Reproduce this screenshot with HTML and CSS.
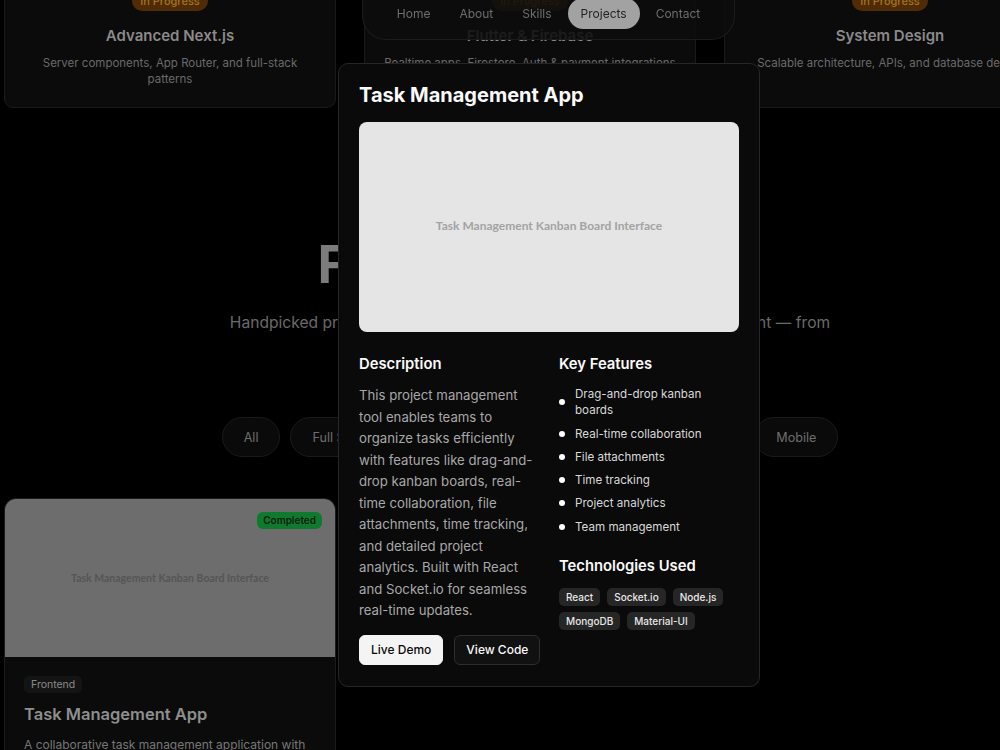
FILE: index.html
```html
<!DOCTYPE html>
<html lang="en">
<head>
  <meta charset="UTF-8" />
  <meta name="viewport" content="width=device-width, initial-scale=1.0" />
  <title>Projects</title>
  <link rel="stylesheet" href="styles.css">
</head>
<body>
  <nav class="topnav">
    <div class="nav-pill">
      <a class="nav-link">Home</a>
      <a class="nav-link">About</a>
      <a class="nav-link">Skills</a>
      <a class="nav-link active">Projects</a>
      <a class="nav-link">Contact</a>
    </div>
  </nav>

  <main class="page">
    <section class="learning">
      <div class="learn-card">
        <span class="badge-progress">In Progress</span>
        <h3>Advanced Next.js</h3>
        <p>Server components, App Router, and full-stack patterns</p>
      </div>
      <div class="learn-card">
        <span class="badge-progress">In Progress</span>
        <h3>Flutter &amp; Firebase</h3>
        <p>Realtime apps, Firestore, Auth &amp; payment integrations</p>
      </div>
      <div class="learn-card">
        <span class="badge-progress">In Progress</span>
        <h3>System Design</h3>
        <p>Scalable architecture, APIs, and database design</p>
      </div>
    </section>

    <section class="projects">
      <h1 class="section-title">Featured Projects</h1>
      <p class="section-sub">Handpicked projects that reflect my approach to design and development — from<br>idea to launch.</p>

      <div class="filters">
        <button class="chip">All</button>
        <button class="chip">Full Stack</button>
        <button class="chip">Frontend</button>
        <button class="chip">Backend</button>
        <button class="chip">Data Analytics</button>
        <button class="chip">Mobile</button>
      </div>

      <div class="project-grid">
        <article class="project-card">
          <div class="project-thumb">
            <span class="status-done">Completed</span>
            <span class="thumb-label">Task Management Kanban Board Interface</span>
          </div>
          <div class="project-body">
            <span class="cat-tag">Frontend</span>
            <h3>Task Management App</h3>
            <p>A collaborative task management application with real-time updates and team features.</p>
          </div>
        </article>
      </div>
    </section>
  </main>

  <div class="modal-backdrop">
    <div class="modal">
      <h2>Task Management App</h2>
      <div class="modal-shot">Task Management Kanban Board Interface</div>

      <div class="modal-cols">
        <div class="modal-col">
          <h3>Description</h3>
          <p class="modal-desc">
            This project management tool enables teams to organize tasks efficiently with features like drag-and-drop kanban boards, real-time collaboration, file attachments, time tracking, and detailed project analytics. Built with React and Socket.io for seamless real-time updates.
          </p>
          <div class="modal-actions">
            <button class="btn btn-light">Live Demo</button>
            <button class="btn btn-dark">View Code</button>
          </div>
        </div>

        <div class="modal-col">
          <h3>Key Features</h3>
          <ul class="features">
            <li>Drag-and-drop kanban boards</li>
            <li>Real-time collaboration</li>
            <li>File attachments</li>
            <li>Time tracking</li>
            <li>Project analytics</li>
            <li>Team management</li>
          </ul>

          <h3 class="tech-title">Technologies Used</h3>
          <div class="tech-tags">
            <span class="tag">React</span>
            <span class="tag">Socket.io</span>
            <span class="tag">Node.js</span>
            <span class="tag">MongoDB</span>
            <span class="tag">Material-UI</span>
          </div>
        </div>
      </div>
    </div>
  </div>
</body>
</html>
```

FILE: styles.css
```css
* { margin: 0; padding: 0; box-sizing: border-box; }
body {
  font-family: 'Inter', 'Noto Sans', sans-serif;
  background: #000;
  color: #fafafa;
  overflow: hidden;
  height: 750px;
}
button {
  font-family: inherit;
  cursor: pointer;
  white-space: nowrap;
}

/* floating nav (page is scrolled, nav sits slightly above the top edge) */
.topnav {
  position: fixed;
  top: -10px;
  left: 0;
  right: 0;
  display: flex;
  justify-content: center;
  padding-left: 97px;
  z-index: 20;
}
.nav-pill {
  display: flex;
  gap: 3px;
  padding: 8px 21px 10px;
  background: rgba(12, 12, 12, 0.88);
  border: 1px solid #1c1c1c;
  border-top: none;
  border-radius: 0 0 24px 24px;
}
.nav-link {
  height: 31px;
  line-height: 31px;
  padding: 0 13px;
  font-size: 12px;
  color: #6e6e6e;
  border-radius: 999px;
}
.nav-link.active {
  background: #a2a2a2;
  color: #242424;
}

/* page */
.page {
  width: 1060px;
  margin-top: -30px;
}
.learning {
  display: grid;
  grid-template-columns: repeat(3, 332px);
  gap: 28px;
  padding: 0 4px;
}
.learn-card {
  display: flex;
  flex-direction: column;
  align-items: center;
  text-align: center;
  padding: 20px 16px;
  background: #0b0b0b;
  border: 1px solid #1a1a1a;
  border-radius: 9px;
}
.badge-progress {
  height: 20px;
  line-height: 20px;
  padding: 0 8px;
  font-size: 11px;
  font-weight: 500;
  color: #a8741f;
  background: #4f2c07;
  border-radius: 999px;
}
.learn-card h3 {
  margin-top: 12px;
  font-size: 15px;
  line-height: 26px;
  font-weight: 600;
  color: #8a8a8a;
}
.learn-card p {
  margin-top: 6px;
  font-size: 11.5px;
  line-height: 16px;
  color: #6a6a6a;
}

.projects {
  margin-top: 127px;
  display: flex;
  flex-direction: column;
  align-items: center;
}
.section-title {
  font-size: 52px;
  line-height: 60px;
  font-weight: 700;
  letter-spacing: -0.025em;
  color: #7c7c7c;
}
.section-sub {
  margin-top: 14px;
  font-size: 15.6px;
  line-height: 28px;
  color: #6a6a6a;
  text-align: center;
}
.filters {
  display: flex;
  gap: 10px;
  margin-top: 52px;
}
.chip {
  height: 40px;
  padding: 0 21px;
  font-size: 12.6px;
  color: #6e6e6e;
  background: #0a0a0a;
  border: 1px solid #1a1a1a;
  border-radius: 999px;
}

.project-grid {
  align-self: stretch;
  display: grid;
  grid-template-columns: repeat(3, 332px);
  gap: 28px;
  padding: 0 4px;
  margin-top: 41px;
}
.project-card {
  background: #0b0b0b;
  border: 1px solid #1c1c1c;
  border-radius: 12px;
  overflow: hidden;
}
.project-thumb {
  position: relative;
  height: 158px;
  background: #6d6d6d;
  display: flex;
  align-items: center;
  justify-content: center;
}
.thumb-label {
  font-family: 'Lato', 'Liberation Sans', sans-serif;
  font-size: 10.5px;
  font-weight: 700;
  color: #555;
}
.status-done {
  position: absolute;
  top: 13px;
  right: 13px;
  height: 17px;
  line-height: 17px;
  padding: 0 6px;
  font-size: 10px;
  font-weight: 600;
  color: #06200d;
  background: #0f7a2d;
  border-radius: 6px;
}
.project-body {
  display: flex;
  flex-direction: column;
  align-items: flex-start;
  padding: 19px 19px 20px;
}
.cat-tag {
  height: 17px;
  line-height: 17px;
  padding: 0 7px;
  font-size: 10.5px;
  color: #8a8a8a;
  background: #141414;
  border-radius: 5px;
}
.project-body h3 {
  margin-top: 9px;
  font-size: 16.5px;
  line-height: 24px;
  font-weight: 600;
  color: #8e8e8e;
}
.project-body p {
  margin-top: 10px;
  font-size: 12px;
  line-height: 18px;
  color: #777;
}

/* modal */
.modal-backdrop {
  position: fixed;
  inset: 0;
  display: flex;
  align-items: center;
  justify-content: center;
  padding-left: 98px;
  z-index: 50;
}
.modal {
  width: 422px;
  padding: 19px 20px 21px;
  background: #0a0a0a;
  border: 1px solid #262626;
  border-radius: 10px;
}
.modal h2 {
  font-size: 20px;
  line-height: 24px;
  font-weight: 700;
  margin-bottom: 15px;
}
.modal-shot {
  height: 210px;
  background: #e5e5e5;
  border-radius: 8px;
  display: flex;
  align-items: center;
  justify-content: center;
  padding-bottom: 4px;
  font-family: 'Lato', 'Liberation Sans', sans-serif;
  font-size: 12px;
  font-weight: 700;
  color: #a3a3a3;
}
.modal-cols {
  display: grid;
  grid-template-columns: minmax(0, 1fr) minmax(0, 1fr);
  gap: 20px;
  margin-top: 20px;
}
.modal h3 {
  font-size: 14.8px;
  line-height: 24px;
  font-weight: 600;
}
.modal-desc {
  margin-top: 9px;
  font-size: 13.2px;
  line-height: 21.5px;
  color: #a8a8a8;
}
.modal-actions {
  display: flex;
  gap: 11px;
  margin-top: 13px;
}
.btn {
  height: 30px;
  padding: 0 11px;
  font-size: 12px;
  font-weight: 500;
  border-radius: 6px;
}
.btn-light {
  background: #f4f4f4;
  color: #0a0a0a;
  border: 1px solid #f4f4f4;
}
.btn-dark {
  background: #111;
  color: #fafafa;
  border: 1px solid #2e2e2e;
}
.features {
  list-style: none;
  margin-top: 10px;
}
.features li {
  display: flex;
  align-items: center;
  gap: 10px;
  font-size: 11.6px;
  line-height: 16px;
  color: #d8d8d8;
}
.features li + li {
  margin-top: 7.25px;
}
.features li::before {
  content: "";
  flex: none;
  width: 6px;
  height: 6px;
  border-radius: 50%;
  background: #fff;
}
.modal h3.tech-title {
  margin-top: 19px;
}
.tech-tags {
  display: flex;
  flex-wrap: wrap;
  gap: 6px 7px;
  margin-top: 10px;
}
.tag {
  height: 18px;
  line-height: 18px;
  padding: 0 7px;
  font-size: 10px;
  font-weight: 500;
  color: #e8e8e8;
  background: #262626;
  border-radius: 5px;
}
```
